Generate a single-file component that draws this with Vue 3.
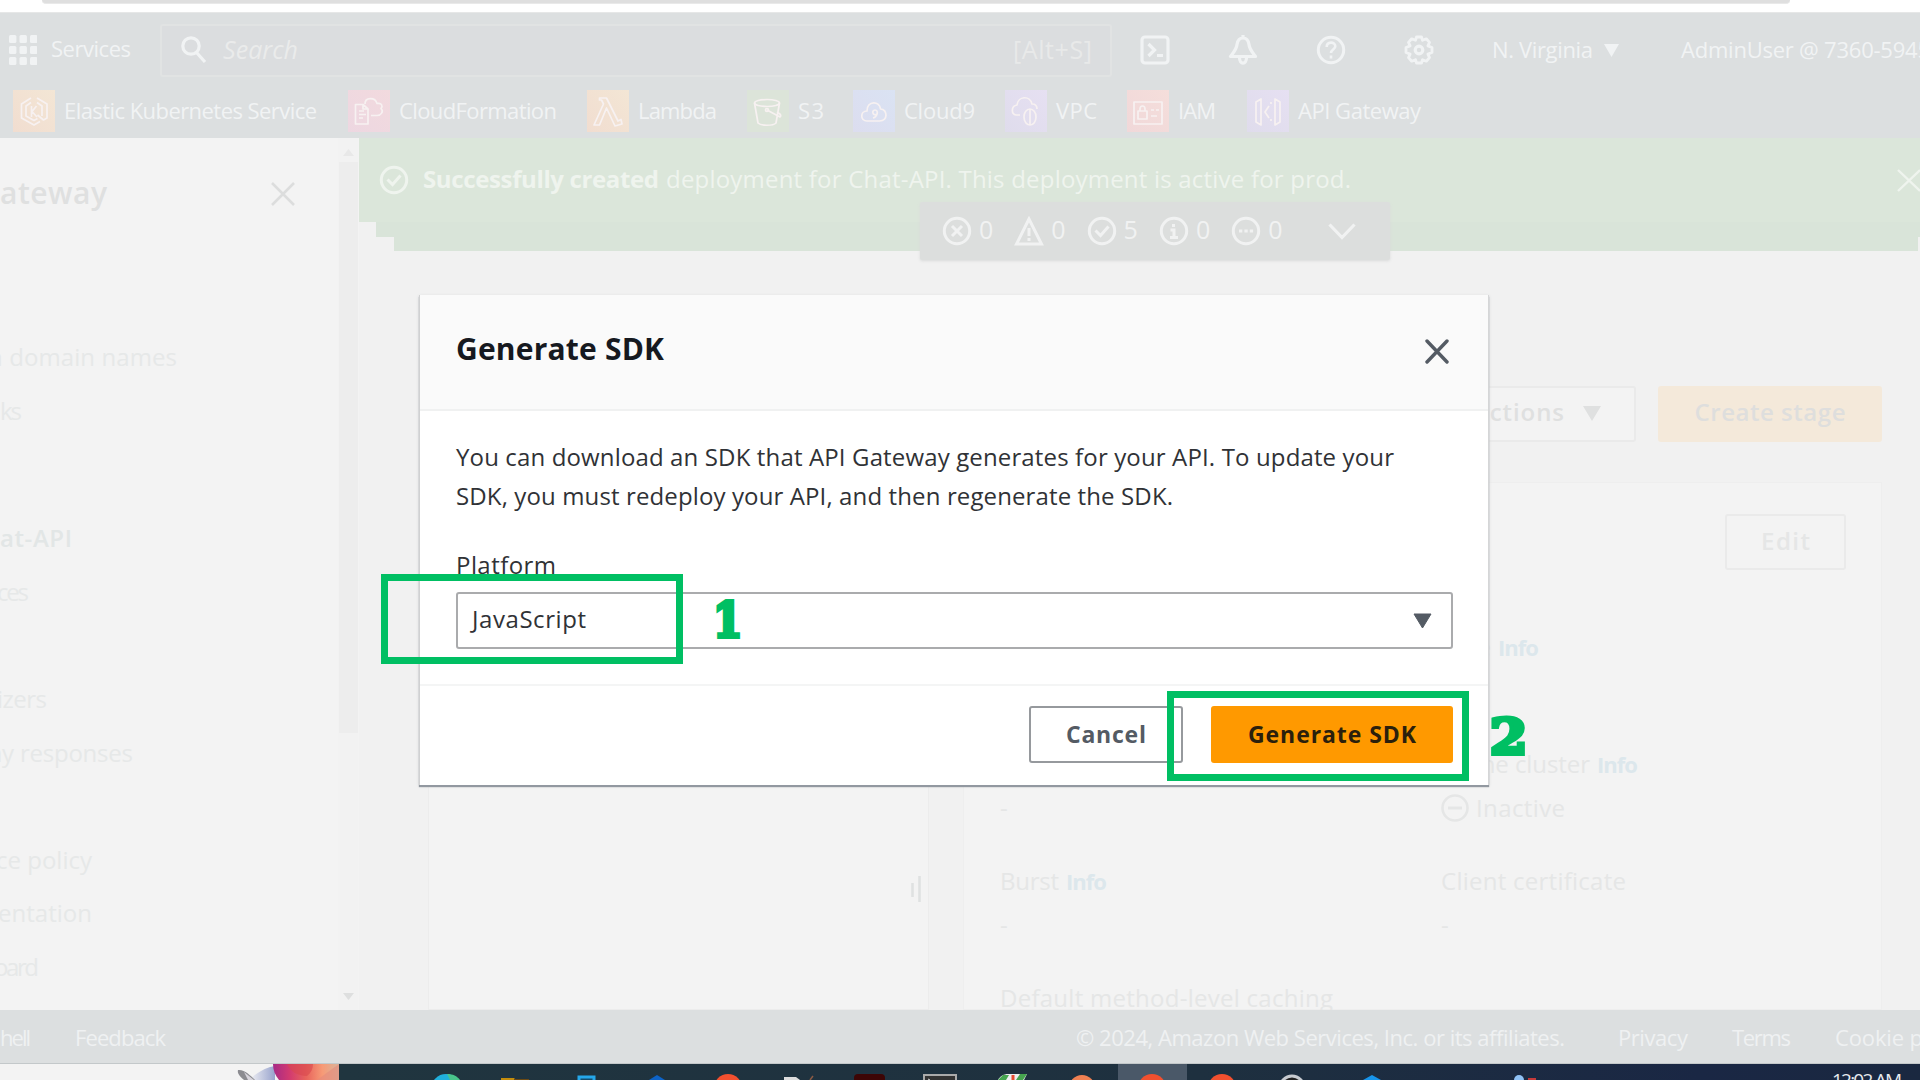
<script setup>
// Spreads a label's letters so that it fills the given width in pixels.
const vFit = {
  mounted(el, { value }) {
    const natural = el.getBoundingClientRect().width
    const gaps = Math.max(el.textContent.length - 1, 1)
    el.style.letterSpacing = `${(value - natural) / gaps}px`
    el.style.width = `${value}px`
  },
}

const favorites = [
  { id: 'eks', name: 'Elastic Kubernetes Service', width: 253, gap: 13 },
  { id: 'cf', name: 'CloudFormation', width: 158, gap: 31 },
  { id: 'lambda', name: 'Lambda', width: 79, gap: 30 },
  { id: 's3', name: 'S3', width: 26, gap: 30 },
  { id: 'cloud9', name: 'Cloud9', width: 71, gap: 29 },
  { id: 'vpc', name: 'VPC', width: 41, gap: 30 },
  { id: 'iam', name: 'IAM', width: 38, gap: 30 },
  { id: 'api', name: 'API Gateway', width: 123, gap: 31 },
]

const links = [
  { text: 'n domain names', end: 177, width: 189, top: 116 },
  { text: 'ks', end: 22, width: 22, top: 22 },
  { text: 'at-API', end: 72, width: 72, top: 95, bold: true },
  { text: 'ces', end: 29, width: 32, top: 22 },
  { text: 'izers', end: 47, width: 50, top: 75 },
  { text: 'ay responses', end: 133, width: 144, top: 22 },
  { text: 'ce policy', end: 92, width: 96, top: 75 },
  { text: 'entation', end: 92, width: 94, top: 21 },
  { text: 'oard', end: 39, width: 45, top: 22 },
]

const counts = [
  { id: 'error', n: 0 },
  { id: 'warning', n: 0 },
  { id: 'success', n: 5 },
  { id: 'info', n: 0 },
  { id: 'progress', n: 0 },
]
</script>

<template>
  <div class="page">
    <div class="chrome"><div class="address"></div></div>

    <header class="nav">
      <div class="nav-top">
        <svg class="grid-icon" width="28" height="30" viewBox="0 0 28 30">
          <template v-for="r in 3" :key="r">
            <rect v-for="c in 3" :key="c" :x="(c - 1) * 10.5" :y="(r - 1) * 11" width="7.4" height="8" rx="1.5" fill="currentColor" />
          </template>
        </svg>
        <span v-fit="80" class="t services">Services</span>
        <div class="search">
          <svg width="28" height="30" viewBox="0 0 28 30" fill="none" stroke="currentColor" stroke-width="3.2">
            <circle cx="11" cy="11" r="8.2" /><path d="M16.5 17.5 25 27" />
          </svg>
          <span v-fit="75" class="t placeholder">Search</span>
          <span v-fit="79" class="t shortcut">[Alt+S]</span>
        </div>
        <svg class="shell" width="30" height="30" viewBox="0 0 30 30" fill="none" stroke="currentColor" stroke-width="3.2">
          <rect x="2" y="2" width="26" height="26" rx="3" /><path d="m8.500 9 6 6-6 6M17 20.500h6" />
        </svg>
        <svg class="gap58" width="30" height="30" viewBox="0 0 30 30" fill="none" stroke="currentColor" stroke-width="3.2" stroke-linejoin="round">
          <path d="M15 3c-4 0-5.500 3-6 6.500C8.500 14.500 5 18 2.500 21.500h25C25 18 21.500 14.500 21 9.500 20.500 6 19 3 15 3zM15 0v3" /><path d="M11.500 22.500c0 7.500 7 7.500 7 0" />
        </svg>
        <svg class="gap58" width="30" height="30" viewBox="0 0 30 30" fill="none" stroke="currentColor" stroke-width="3">
          <circle cx="15" cy="15" r="12.700" /><path d="M10.700 12c0-6 8.600-5.500 8.600-.8 0 3.300-4.300 3.300-4.300 6.800M15 20.500v3" stroke-width="2.600" />
        </svg>
        <svg class="gap58" width="30" height="30" viewBox="0 0 30 30" fill="none" stroke="currentColor" stroke-linejoin="round">
          <path d="M12.500 2h5l1 3.300 3.800-1.500 3.200 3.600-1.600 3.500 4.100 1.600v5l-4.100 1.600 1.600 3.500-3.200 3.600-3.800-1.500-1 3.300h-5l-1-3.300-3.800 1.500-3.200-3.600 1.600-3.500L2 17.500v-5l4.100-1.600-1.600-3.500 3.200-3.600 3.800 1.500z" stroke-width="2.800" />
          <circle cx="15" cy="15" r="3.800" stroke-width="3.200" />
        </svg>
        <span v-fit="101" class="t region">N. Virginia</span>
        <svg class="caret" width="15" height="13" viewBox="0 0 15 13"><path d="M0 0h15L7.500 13z" fill="currentColor" /></svg>
        <span v-fit="249" class="t user">AdminUser @ 7360-5945</span>
      </div>

      <div class="favorites">
        <div v-for="f in favorites" :key="f.id" class="favorite" :style="{ marginLeft: f.gap + 'px' }">
          <div class="tile" :class="f.id">
            <svg width="42" height="42" viewBox="0 0 42 42" fill="none" stroke="currentColor" stroke-width="1.700" stroke-linejoin="round">
              <template v-if="f.id === 'eks'">
                <path d="m18 8-9.500 6v14l12.500 7 6-3.500M24 8l10 6v14l-3.500 2-6-5" /><path d="M18 12.500 13 16v10l8 4.500 3.500-2M24 12.500l5 3.500v10M18.500 16v11M23.500 16l-4.500 5.500 5 5.500" />
              </template>
              <template v-else-if="f.id === 'cf'">
                <path d="M7.500 14.500H15l5 4.500v15H7.500zM15 14.500V19h5M11 21h5M11 24.500h7M11 28h4" /><path d="M17 14c0-7 10-7 12-.5 5-1 6 3 4 5 3 3 0 7-4 7h-6" />
              </template>
              <path v-else-if="f.id === 'lambda'" d="M12.500 8h7l11.500 23 3-1.500 1 4.500-7 2-8.500-18-7 17H7l9.500-21-2-4h-2z" />
              <template v-else-if="f.id === 's3'">
                <ellipse cx="20" cy="13" rx="12.500" ry="3.500" /><path d="m7.500 13 3.500 20c3 3 15 3 18 0l3.500-20M20 20l13 7c2-2-1-4-3-5" /><circle cx="20" cy="20" r="1.500" />
              </template>
              <template v-else-if="f.id === 'cloud9'">
                <path d="M14 31c-7 0-7-10 0-10 0-11 13-10 13.500-2 7 0 8 12-1 12z" /><path d="M24 24c-4 3-6-4-2-4 4 0 2.500 7-2 8" />
              </template>
              <template v-else-if="f.id === 'vpc'">
                <path d="M15 25H11c-5-1-5-9 1-10 1-9 13-10 15-1 4 0 5 3 5 5" /><ellipse cx="25" cy="27" rx="6" ry="8" /><path d="M25 19v16" />
              </template>
              <template v-else-if="f.id === 'iam'">
                <path d="M7 12h28v22H7zM11 21h9v8h-9zM13 21v-2c0-4 5-4 5 0v2M24 20h3M29 20h3M24 26h6" />
              </template>
              <path v-else d="m9 12 5-3v26l-5-3zM33 12l-5-3v26l5-3zM22 16l-4 6 4 6M24 12v2M24 29v2" />
            </svg>
          </div>
          <span v-fit="f.width" class="t fav-name">{{ f.name }}</span>
        </div>
      </div>
    </header>

    <div class="workspace">
      <aside class="sidebar">
        <div class="side-main">
          <div class="side-head">
            <span v-fit="107" class="t side-title">ateway</span>
            <svg class="side-x" width="24" height="24" viewBox="0 0 24 24" stroke="currentColor" stroke-width="2.600"><path d="m1 1 22 22M23 1 1 23" /></svg>
          </div>
          <div v-for="l in links" :key="l.text" class="link" :class="{ bold: l.bold }" :style="{ marginTop: l.top + 'px', width: l.end + 'px' }">
            <span v-fit="l.width" class="t">{{ l.text }}</span>
          </div>
        </div>
        <div class="scroll">
          <svg width="11" height="7" viewBox="0 0 11 7"><path d="M0 7h11L5.500 0z" fill="#e8e8e8" /></svg>
          <div class="thumb"></div>
          <svg class="down" width="11" height="7" viewBox="0 0 11 7"><path d="M0 0h11L5.500 7z" fill="#dedfdf" /></svg>
        </div>
      </aside>

      <main class="main">
        <div class="flash">
          <svg width="30" height="30" viewBox="0 0 30 30" fill="none" stroke="currentColor" stroke-width="3"><circle cx="15" cy="15" r="12.700" /><path d="m8.500 14.500 5 5 8-9" /></svg>
          <span v-fit="236" class="t strong">Successfully created</span>
          <span v-fit="685" class="t flash-text">deployment for Chat-API. This deployment is active for prod.</span>
          <svg class="flash-x" width="24" height="23" viewBox="0 0 24 23" stroke="currentColor" stroke-width="2.400"><path d="m1 1 22 21M23 1 1 22" /></svg>
        </div>
        <div class="layer second"></div>
        <div class="layer third"></div>

        <div class="stage-head">
          <div class="ghost actions">
            <span v-fit="91" class="t">Actions</span>
            <svg width="18" height="15" viewBox="0 0 18 15"><path d="M0 0h18L9 15z" fill="currentColor" /></svg>
          </div>
          <div class="create"><span v-fit="151" class="t">Create stage</span></div>
        </div>

        <div class="panels">
          <section class="tree">
            <svg width="10" height="28" viewBox="0 0 10 28" stroke="#dfe1e1" stroke-width="2.600"><path d="M1.500 8v14M8.500 1v26" /></svg>
          </section>
          <section class="details">
            <div class="details-head"><div class="ghost edit"><span v-fit="49" class="t">Edit</span></div></div>
            <div class="columns">
              <div class="col">
                <div class="label"></div>
                <div class="value"></div>
                <div class="label"></div>
                <div class="value">-</div>
                <div class="label"><span v-fit="59" class="t">Burst</span><span v-fit="41" class="t info">Info</span></div>
                <div class="value">-</div>
                <div class="label"><span v-fit="333" class="t">Default method-level caching</span></div>
              </div>
              <div class="col">
                <div class="label"><span class="t tail">e</span><span v-fit="41" class="t info">Info</span></div>
                <div class="value"></div>
                <div class="label"><span v-fit="149" class="t">Cache cluster</span><span v-fit="41" class="t info">Info</span></div>
                <div class="value">
                  <svg width="29" height="30" viewBox="0 0 29 30" fill="none" stroke="currentColor" stroke-width="2.600"><circle cx="14" cy="15" r="12.500" /><path d="M7 15h14" stroke-width="3" /></svg>
                  <span v-fit="89" class="t inactive">Inactive</span>
                </div>
                <div class="label"><span v-fit="185" class="t">Client certificate</span></div>
                <div class="value">-</div>
              </div>
            </div>
          </section>
        </div>
      </main>
    </div>

    <footer class="footer">
      <span v-fit="31" class="t f-shell">hell</span>
      <span v-fit="91" class="t f-feedback">Feedback</span>
      <span v-fit="489" class="t f-copy">© 2024, Amazon Web Services, Inc. or its affiliates.</span>
      <span v-fit="70" class="t f-privacy">Privacy</span>
      <span v-fit="59" class="t f-terms">Terms</span>
      <span v-fit="88" class="t f-cookie">Cookie p</span>
    </footer>

    <div class="taskbar">
      <svg class="art" width="102" height="16" viewBox="0 0 102 16">
        <defs>
          <linearGradient id="orb"><stop offset="0" stop-color="#a62a86" /><stop offset=".25" stop-color="#d23a70" /><stop offset=".5" stop-color="#e8645c" /><stop offset=".75" stop-color="#f79a76" /><stop offset="1" stop-color="#d9b49b" /></linearGradient>
          <linearGradient id="haze"><stop offset="0" stop-color="#f3f3f5" /><stop offset="1" stop-color="#98a3cd" /></linearGradient>
        </defs>
        <path d="M12 16C20 8 30 3 38 2v14z" fill="url(#haze)" />
        <path d="M36 0h66v16H42c-4-5-6-10-6-16z" fill="url(#orb)" />
        <path d="M50 0h26c0 5-2 9-6 12-10 0-17-5-20-12z" fill="#d9484f" opacity=".6" />
        <path d="M80 16 102 0v16z" fill="#e58b7d" opacity=".6" />
        <path d="M1 6c6-1 12 5 17 10H7C3 13 0 9 1 6z" fill="#8b8b90" /><path d="m7 8 10 8h-6z" fill="#d7d4dc" />
      </svg>
      <div class="apps">
        <svg width="1280" height="16" viewBox="339 0 1280 16">
          <rect x="1118" width="69" height="16" fill="#4a5868" />
          <circle cx="446" cy="25" r="15" fill="#20b0dc" /><path d="M447 10c6 0 10 2 13 6h-10z" fill="#49c48b" />
          <path d="M501 14h13l2 2h-15z" fill="#c48d0c" /><path d="M514 15h15v1h-15z" fill="#6b4a14" />
          <path d="M579 16v-3h15v3" fill="#164d6c" stroke="#25a7ea" stroke-width="3" />
          <path d="m649 16 8-5 8 5z" fill="#0d63c7" />
          <circle cx="728" cy="24" r="14" fill="#f2502f" />
          <path d="M784 13h12l4 3h-16z" fill="#ddd" /><path d="m810 16 3-4" stroke="#8b5a44" stroke-width="1.500" />
          <rect x="854" y="10" width="31" height="12" rx="4" fill="#3d0505" />
          <path d="M924 17v-6h32v6" fill="#343434" stroke="#aaa" stroke-width="2" /><path d="m928 15 2 1" stroke="#ddd" />
          <path d="M998 16c2-4 6-6 10-6h19l-3 6z" fill="#eee" /><path d="m998 16 5-5h6l-3 5zM1020 10h7l-4 6h-7z" fill="#46a54f" /><path d="M1013 11v5" stroke="#e74c32" stroke-width="3" />
          <circle cx="1082" cy="24" r="13" fill="#f08052" />
          <circle cx="1152" cy="24" r="14" fill="#f2502f" />
          <circle cx="1222" cy="24" r="14" fill="#f2502f" />
          <circle cx="1292" cy="24" r="12" fill="#222" stroke="#c7cbd0" stroke-width="3" />
          <path d="m1363 16 9-5 9 5z" fill="#1794ea" />
          <circle cx="1519" cy="16" r="5" fill="#8fc1f5" /><path d="M1528 14h8v2h-8z" fill="#c63a3a" />
        </svg>
      </div>
      <span v-fit="70" class="t clock">12:02 AM</span>
    </div>

    <div class="badge">
      <div v-for="c in counts" :key="c.id" class="count">
        <svg width="30" height="30" viewBox="0 0 30 30" fill="none" stroke="currentColor" stroke-width="3">
          <path v-if="c.id === 'warning'" d="M15 3 2.500 28h25zM15 12v8M15 22v3" />
          <circle v-else cx="15" cy="15" r="12.700" />
          <path v-if="c.id === 'error'" d="m10 10 10 10M20 10 10 20" />
          <path v-if="c.id === 'success'" d="m8.500 14.500 5 5 8-9" />
          <path v-if="c.id === 'info'" d="M14.500 8v3M11.500 14H15v7.500M11 21.500h8" />
          <path v-if="c.id === 'progress'" d="M8 15h3.300M13.400 15h3.300M18.800 15h3.300" />
        </svg>
        <span class="t">{{ c.n }}</span>
      </div>
      <svg class="chevron" width="28" height="17" viewBox="0 0 28 17" fill="none" stroke="currentColor" stroke-width="3.200"><path d="m1.500 1.500 12.500 13 12.500-13" /></svg>
    </div>

    <div class="modal">
      <div class="modal-head">
        <span v-fit="208" class="t modal-title">Generate SDK</span>
        <svg width="24" height="25" viewBox="0 0 24 25" stroke="#545b64" stroke-width="3.400" stroke-linecap="round"><path d="m2 2 20 21M22 2 2 23" /></svg>
      </div>
      <div class="modal-body">
        <span v-fit="938" class="t line">You can download an SDK that API Gateway generates for your API. To update your</span>
        <span v-fit="717" class="t line">SDK, you must redeploy your API, and then regenerate the SDK.</span>
        <span v-fit="100" class="t platform">Platform</span>
        <div class="select">
          <span v-fit="114" class="t">JavaScript</span>
          <svg width="19" height="16" viewBox="0 0 19 16"><path d="M1 1h17L9.500 15z" fill="#545b64" stroke="#545b64" stroke-linejoin="round" /></svg>
        </div>
      </div>
      <div class="modal-foot">
        <button class="cancel"><span v-fit="80" class="t">Cancel</span></button>
        <button class="generate"><span v-fit="168" class="t">Generate SDK</span></button>
      </div>
    </div>

    <div class="mark one"></div>
    <div class="mark two"></div>
    <span class="num n1">1</span>
    <span class="num n2">2</span>
  </div>
</template>

<style>
body {
  margin: 0;
}
</style>

<style scoped>
.page {
  position: relative;
  display: flex;
  flex-direction: column;
  width: 1920px;
  height: 1080px;
  overflow: hidden;
  background: #f1f1f1;
  font: 24px/32px "Open Sans", "Noto Sans", sans-serif;
  color: #e4e5e5;
}
.page * {
  box-sizing: border-box;
}
svg {
  display: block;
  flex: none;
}
.t {
  display: inline-block;
  flex: none;
  white-space: nowrap;
}
.chrome {
  height: 13px;
  background: #fff;
  border-bottom: 1px solid #e6e7e7;
}
.address {
  width: 1748px;
  height: 4px;
  margin-left: 42px;
  background: #dfdfdf;
  border-bottom: 1px solid #e9e9e9;
  border-radius: 0 0 12px 12px;
}
.nav {
  height: 125px;
  background: #dcdfe0;
  color: #f1f3f4;
}
.nav-top {
  display: flex;
  align-items: center;
  height: 74px;
  overflow: hidden;
  font-size: 22px;
}
.grid-icon {
  margin-left: 9px;
}
.services {
  margin: -4px 0 0 14px;
  font-weight: 500;
}
.search {
  display: flex;
  flex: none;
  align-items: center;
  width: 952px;
  height: 53px;
  margin-left: 29px;
  padding-right: 18px;
  border: 2px solid #e1e3e3;
  border-radius: 3px;
  background: #dbdddf;
  font-size: 25px;
}
.search svg {
  margin-left: 18px;
}
.search .t {
  margin-top: -2px;
}
.placeholder {
  margin-left: 15px;
  font-style: italic;
  color: #eaebeb;
}
.shortcut {
  margin-left: auto;
  color: #e8e9e9;
}
.shell {
  margin-left: 28px;
}
.gap58 {
  margin-left: 58px;
}
.region {
  margin: -2px 0 0 58px;
}
.caret {
  margin-left: 11px;
}
.user {
  margin: -2px 0 0 62px;
}
.favorites {
  display: flex;
  padding-top: 3px;
}
.favorite {
  display: flex;
  align-items: center;
}
.fav-name {
  margin: -3px 0 0 9px;
  font-size: 22px;
  font-weight: 500;
}
.tile {
  width: 42px;
  height: 42px;
  color: #f7f1f1;
}
.eks,
.lambda {
  background: linear-gradient(45deg, #f1ddd0, #f3e6d5);
}
.cf {
  background: linear-gradient(45deg, #edd7e1, #f2dade);
}
.s3 {
  background: #dce4d9;
}
.cloud9 {
  background: linear-gradient(45deg, #dcddef, #dae3f3);
}
.vpc,
.api {
  background: linear-gradient(45deg, #dfdcec, #e6e0f2);
}
.iam {
  background: linear-gradient(45deg, #f0d8d9, #f5dedb);
}
.workspace {
  display: flex;
  height: 872px;
  overflow: hidden;
}
.sidebar {
  display: flex;
  flex: none;
  width: 359px;
  background: #f3f3f3;
}
.side-main {
  width: 338px;
}
.side-head {
  display: flex;
  align-items: center;
  justify-content: space-between;
  height: 62px;
  margin-top: 25px;
  padding-right: 43px;
  color: #dfe0e0;
}
.side-title {
  margin-top: -2px;
  font-size: 30px;
  font-weight: 600;
}
.side-x {
  color: #dcdddd;
}
.link {
  display: flex;
  justify-content: flex-end;
  height: 32px;
  color: #e6e8e8;
}
.bold {
  font-weight: 600;
  color: #e2e6e6;
}
.scroll {
  display: flex;
  flex-direction: column;
  align-items: center;
  width: 20px;
  padding-top: 11px;
  background: #f2f2f2;
}
.thumb {
  width: 19px;
  height: 571px;
  margin-top: 6px;
  background: #ededed;
}
.down {
  margin-top: 260px;
}
.main {
  width: 1561px;
}
.flash {
  display: flex;
  align-items: center;
  height: 84px;
  padding-left: 20px;
  background: #dbe6da;
  color: #eff4ee;
}
.strong {
  margin: -2px 7px 0 14px;
  font-weight: 700;
}
.flash-text {
  margin-top: -2px;
}
.flash-x {
  margin-left: 546px;
}
.layer {
  background: #d9e4d9;
}
.second {
  height: 15px;
  margin-left: 17px;
}
.third {
  height: 14px;
  margin: 0 2px 0 35px;
}
.stage-head {
  display: flex;
  justify-content: flex-end;
  gap: 22px;
  height: 56px;
  margin-top: 135px;
  padding-right: 38px;
  font-weight: 600;
  color: #dfe0e0;
}
.ghost {
  display: flex;
  align-items: center;
  justify-content: center;
  border: 2px solid #eaeaea;
  border-radius: 3px;
  background: #f3f3f3;
}
.actions {
  justify-content: flex-end;
  width: 200px;
  gap: 19px;
  padding: 0 33px 5px 0;
}
.actions svg {
  margin-top: 3px;
}
.create {
  display: flex;
  align-items: center;
  justify-content: center;
  width: 224px;
  padding-bottom: 5px;
  border-radius: 3px;
  background: #f4e9da;
  color: #dededd;
}
.panels {
  display: flex;
  height: 528px;
  margin-top: 40px;
  padding-left: 69px;
}
.tree {
  display: flex;
  justify-content: flex-end;
  width: 501px;
  padding: 392px 7px 0 0;
  border: 1px solid #ececec;
  background: #f3f3f3;
}
.details {
  width: 919px;
  margin-left: 34px;
  padding: 31px 35px 0 36px;
  border: 1px solid #eeeeee;
  background: #f3f3f3;
  color: #e5e6e6;
}
.details-head {
  display: flex;
  justify-content: flex-end;
  height: 56px;
  font-weight: 600;
}
.edit {
  width: 121px;
  padding-bottom: 2px;
}
.columns {
  display: flex;
  margin-top: 61px;
}
.col {
  flex: none;
  width: 441px;
}
.label {
  display: flex;
  gap: 7px;
  height: 32px;
}
.value {
  display: flex;
  align-items: center;
  height: 56px;
  margin-bottom: 29px;
}
.info {
  font-weight: 700;
  font-size: 22px;
  color: #dce7ec;
}
.tail {
  width: 50px;
  text-align: right;
}
.inactive {
  margin-left: 6px;
}
.footer {
  display: flex;
  align-items: center;
  height: 54px;
  overflow: hidden;
  border-bottom: 1px solid #c3c8ca;
  background: #dcdfe0;
  color: #eff1f2;
  font-size: 22px;
}
.f-feedback {
  margin-left: 44px;
}
.f-copy {
  margin-left: 910px;
}
.f-privacy {
  margin-left: 53px;
}
.f-terms {
  margin-left: 44px;
}
.f-cookie {
  margin-left: 44px;
}
.taskbar {
  display: flex;
  height: 16px;
  overflow: hidden;
  background: linear-gradient(90deg, #f3f3f3 339px, #20353f 339px, #1e303f 1200px, #1a2744 1700px, #1a2840);
}
.art {
  margin-left: 237px;
}
.clock {
  margin: 4px 0 0 213px;
  font-size: 19px;
  line-height: 24px;
  color: #e8eaee;
}
.badge {
  position: absolute;
  top: 202px;
  left: 920px;
  display: flex;
  align-items: center;
  width: 470px;
  height: 58px;
  padding-left: 22px;
  border-radius: 2px;
  background: #dcdedd;
  box-shadow: 0 1px 3px #d9dada;
  color: #f1f2f2;
  font-size: 25px;
}
.count {
  display: flex;
  align-items: center;
  width: 72.300px;
  gap: 7px;
}
.count .t {
  margin-top: -4px;
}
.chevron {
  margin-left: 25px;
}
.modal {
  position: absolute;
  top: 295px;
  left: 419px;
  width: 1070px;
  height: 490px;
  border-right: 1px solid #d5d6d7;
  border-left: 1px solid #d0d1d2;
  background: #fff;
  box-shadow: 0 2px 1px #9298a0, 0 1px 3px #d5d6d7;
  color: #303236;
}
.modal-head {
  display: flex;
  align-items: center;
  justify-content: space-between;
  height: 116px;
  padding: 0 39px 2px 36px;
  border-bottom: 2px solid #f0f1f1;
  background: #fafafa;
}
.modal-title {
  margin-top: -4px;
  font-size: 30px;
  font-weight: 700;
  color: #16191f;
}
.modal-body {
  display: flex;
  flex-direction: column;
  align-items: flex-start;
  height: 273px;
  padding: 26px 34px 0 36px;
}
.line {
  height: 39px;
  line-height: 39px;
}
.platform {
  margin-top: 34px;
}
.select {
  display: flex;
  align-items: center;
  justify-content: space-between;
  width: 997px;
  height: 57px;
  margin-top: 11px;
  padding: 0 19px 0 14px;
  border: 2px solid #aaabad;
  border-radius: 3px;
}
.select .t {
  margin-top: -3px;
}
.modal-foot {
  display: flex;
  justify-content: flex-end;
  gap: 28px;
  height: 101px;
  padding: 20px 35px 0 0;
  border-top: 2px solid #f4f5f5;
}
button {
  height: 57px;
  margin: 0;
  padding: 0 0 1px;
  border-radius: 3px;
  font: 700 23px/32px "Open Sans", "Noto Sans", sans-serif;
}
.cancel {
  width: 154px;
  border: 2px solid #96999d;
  background: #fff;
  color: #545b64;
}
.generate {
  width: 242px;
  border: 0;
  background: #ff9900;
  color: #2b1f0c;
}
.mark {
  position: absolute;
  width: 302px;
  height: 90px;
  border: 7px solid #00bf63;
}
.one {
  top: 574px;
  left: 381px;
}
.two {
  top: 691px;
  left: 1167px;
}
.num {
  position: absolute;
  font: 900 48px/60px "DejaVu Serif", serif;
  color: #00bf63;
  -webkit-text-stroke: 4px #00bf63;
}
.n1 {
  top: 590px;
  left: 711px;
  transform: scaleX(0.88);
}
.n2 {
  top: 707px;
  left: 1492px;
  transform: scaleX(1.13);
}
</style>
